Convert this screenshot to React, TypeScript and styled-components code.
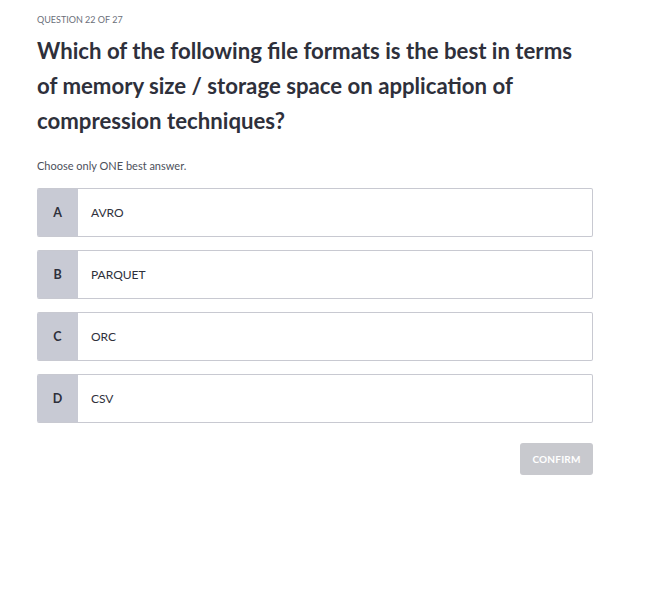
import React from "react";
import styled, { createGlobalStyle } from "styled-components";

const Global = createGlobalStyle`
  html, body { margin: 0; padding: 0; background: #fff; }
  body { font-family: "Lato", "Liberation Sans", sans-serif; }
`;

const Page = styled.div`
  width: 556px;
  padding: 14px 0 0 37px;
  display: flex;
  flex-direction: column;
`;

const Counter = styled.div`
  font-size: 9px;
  color: #6b6f7a;
  text-transform: uppercase;
  line-height: 12px;
`;

const Title = styled.h1`
  margin: 7px 0 0;
  font-size: 22.2px;
  line-height: 35px;
  font-weight: 700;
  color: #2e303b;
`;

const Hint = styled.div`
  margin-top: 21px;
  font-size: 11px;
  line-height: 14px;
  color: #4c505b;
`;

const Options = styled.div`
  margin-top: 15px;
  display: flex;
  flex-direction: column;
  gap: 13px;
`;

const Option = styled.div`
  display: flex;
  height: 49px;
  border: 1px solid #c8c9d1;
  border-left: none;
  border-radius: 2px;
  box-sizing: border-box;
  overflow: hidden;
  cursor: pointer;
`;

const Letter = styled.div`
  width: 41px;
  margin: -1px 0;
  flex-shrink: 0;
  background: #c8cad4;
  display: flex;
  align-items: center;
  justify-content: center;
  font-size: 12.5px;
  font-weight: 700;
  color: #2e303b;
`;

const Label = styled.div`
  display: flex;
  align-items: center;
  padding-left: 13px;
  font-size: 12px;
  color: #2e303b;
`;

const Footer = styled.div`
  display: flex;
  justify-content: flex-end;
  margin-top: 20px;
`;

const Confirm = styled.button`
  width: 73px;
  height: 32px;
  border: none;
  border-radius: 3px;
  background: #c8c9ce;
  color: #fff;
  font-family: inherit;
  font-size: 10px;
  font-weight: 700;
  letter-spacing: 0.2px;
`;

const options = [
  { key: "A", text: "AVRO" },
  { key: "B", text: "PARQUET" },
  { key: "C", text: "ORC" },
  { key: "D", text: "CSV" },
];

export default function App() {
  return (
    <>
      <Global />
      <Page>
        <Counter>Question 22 of 27</Counter>
        <Title>
          Which of the following file formats is the best in terms of memory size / storage space on application of compression techniques?
        </Title>
        <Hint>Choose only ONE best answer.</Hint>
        <Options>
          {options.map((o) => (
            <Option key={o.key}>
              <Letter>{o.key}</Letter>
              <Label>{o.text}</Label>
            </Option>
          ))}
        </Options>
        <Footer>
          <Confirm>CONFIRM</Confirm>
        </Footer>
      </Page>
    </>
  );
}
